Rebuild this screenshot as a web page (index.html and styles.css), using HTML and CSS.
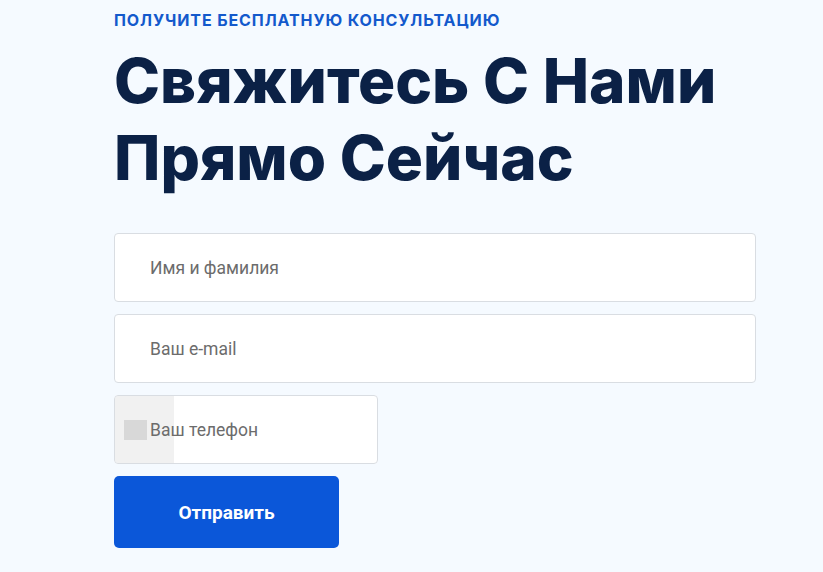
FILE: index.html
```html
<!DOCTYPE html>
<html lang="ru">
<head>
    <meta charset="UTF-8">
    <meta name="viewport" content="width=device-width, initial-scale=1.0">
    <title>Связитесь с нами</title>
    <link rel="stylesheet" href="styles.css">
</head>
<body>
    <section class="contact">
        <p class="subtitle">Получите бесплатную консультацию</p>
        <h1>Свяжитесь С Нами<br>Прямо Сейчас</h1>

        <form class="contact-form">
            <input type="text" class="field" placeholder="Имя и фамилия">
            <input type="email" class="field" placeholder="Ваш e-mail">
            <div class="phone">
                <div class="flag"><span class="flag-box"></span></div>
                <input type="tel" class="field" placeholder="Ваш телефон">
            </div>
            <button type="submit">Отправить</button>
        </form>
    </section>
</body>
</html>
```

FILE: styles.css
```css
body {
    margin: 0;
    background: #f5faff;
    font-family: 'Inter', 'Roboto', sans-serif;
}

.contact {
    padding: 10px 0 0 114px;
    width: 642px;
}

.subtitle {
    margin: 0;
    font-size: 16px;
    line-height: 20px;
    font-weight: 700;
    letter-spacing: 0.9px;
    text-transform: uppercase;
    color: #1359cc;
}

h1 {
    margin: 12px 0 0;
    font-size: 62px;
    line-height: 77px;
    font-weight: 800;
    color: #0b2146;
    white-space: nowrap;
}

.contact-form {
    display: flex;
    flex-direction: column;
    align-items: flex-start;
    gap: 12px;
    margin-top: 37px;
}

.field {
    box-sizing: border-box;
    width: 642px;
    height: 69px;
    padding: 0 35px;
    border: 1px solid #d9dde2;
    border-radius: 4px;
    background: #fff;
    font-family: 'Roboto', sans-serif;
    font-size: 17.5px;
    color: #333;
}

.field::placeholder {
    color: #6c6c6c;
}

.phone {
    position: relative;
    background: #fff;
    border-radius: 4px;
}

.phone .field {
    position: relative;
    width: 264px;
    background: transparent;
}

.flag {
    position: absolute;
    left: 1px;
    top: 1px;
    bottom: 1px;
    width: 59px;
    border-radius: 4px 0 0 4px;
    background: #f1f1f1;
    display: flex;
    align-items: center;
    padding-left: 9px;
    box-sizing: border-box;
}

.flag-box {
    width: 23px;
    height: 20px;
    background: #d8d8d8;
}

.contact-form button {
    width: 225px;
    height: 72px;
    border: none;
    border-radius: 5px;
    background: #0b57d9;
    color: #fff;
    font-family: 'Roboto', sans-serif;
    font-size: 19px;
    font-weight: 700;
    cursor: pointer;
}
```
